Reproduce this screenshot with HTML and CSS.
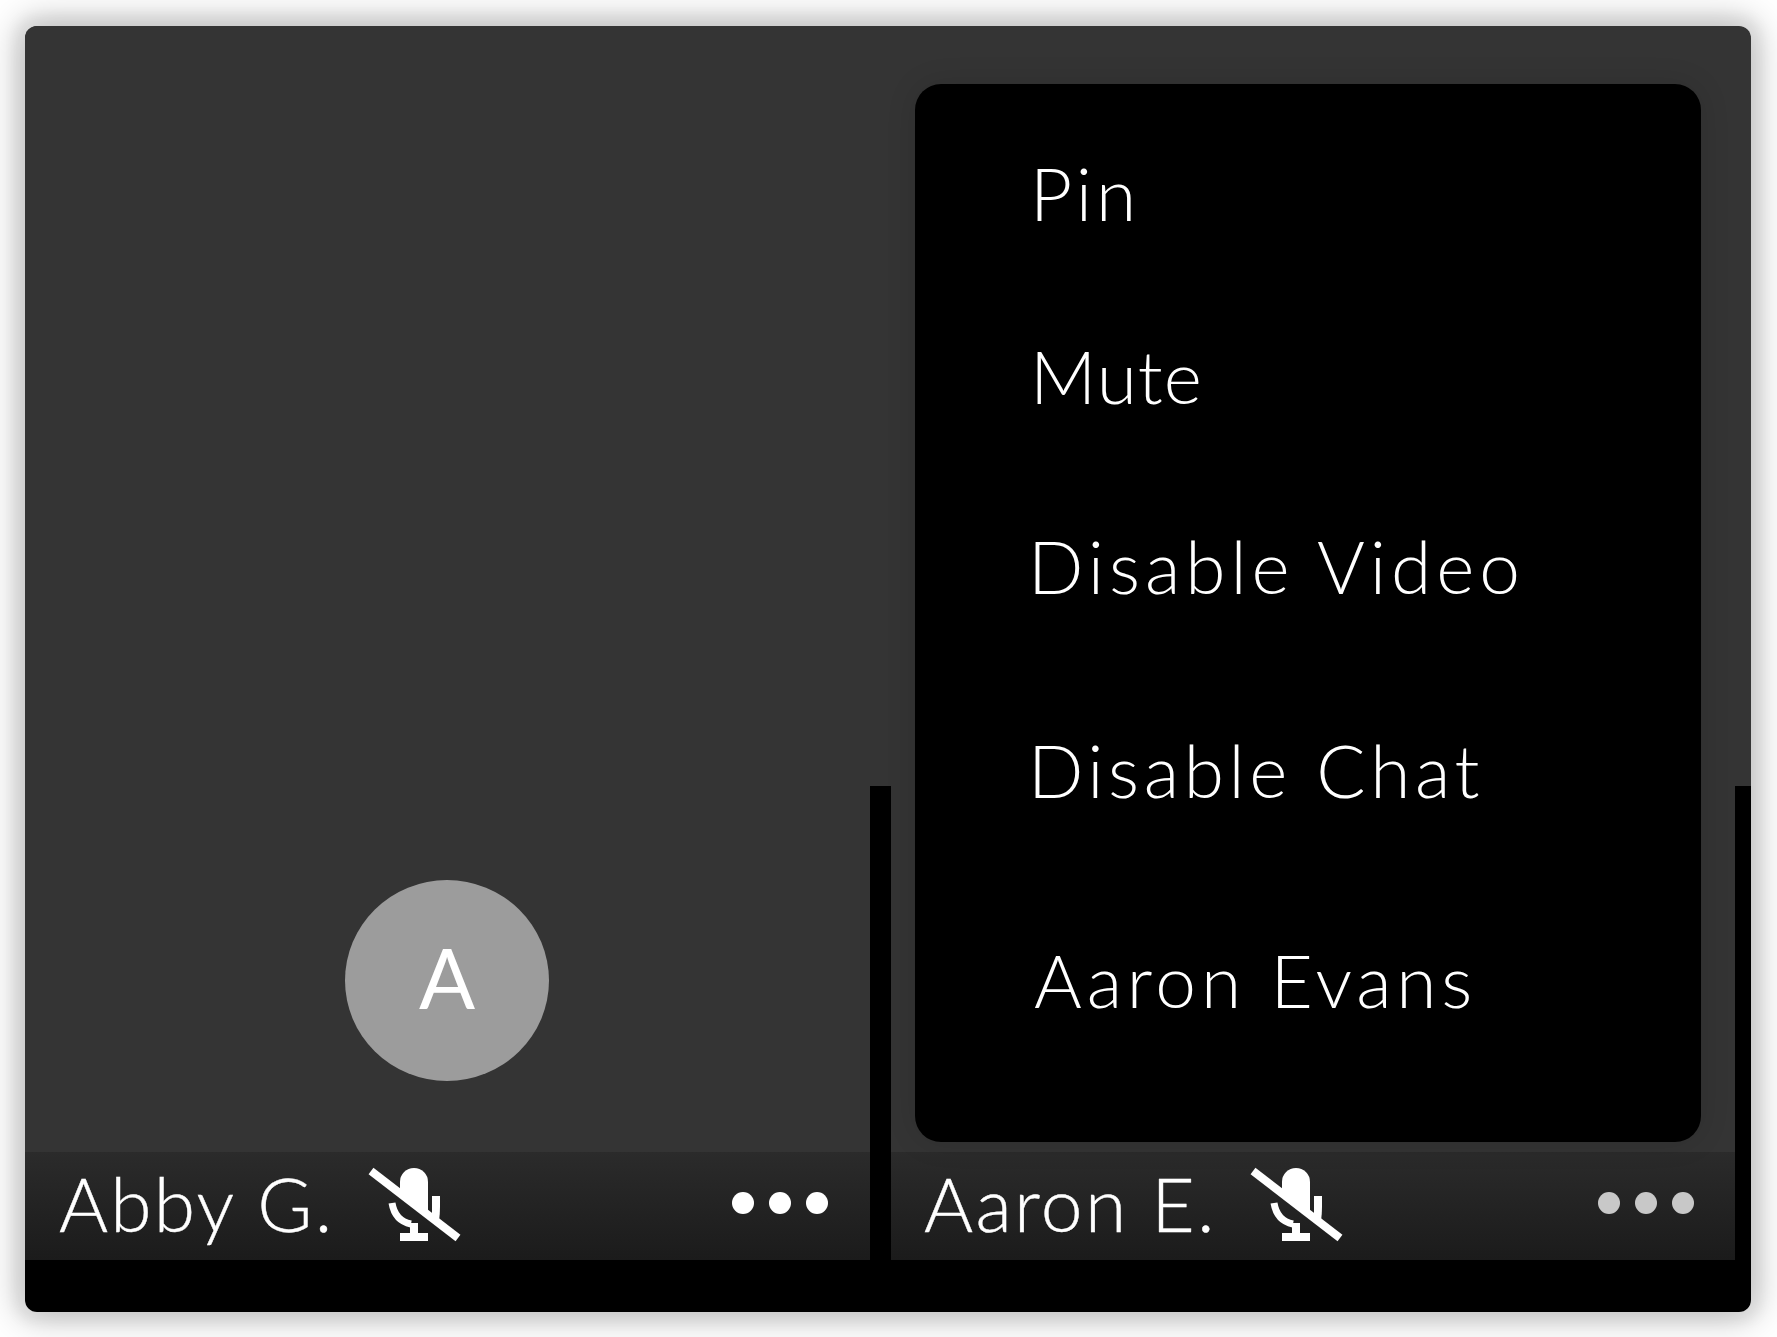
FILE: index.html
```html
<!DOCTYPE html>
<html lang="en">
<head>
<meta charset="utf-8">
<title>Meeting tiles</title>
<link rel="stylesheet" href="styles.css">
</head>
<body>
<main class="card">
  <section class="tile tile-left">
    <div class="avatar"><span class="initial">A</span></div>
    <footer class="bar">
      <span class="name">Abby G.</span>
      <svg class="mic" viewBox="0 0 100 80" aria-hidden="true">
        <path class="mic-fill" d="M35 17a14 14 0 0 1 28 0V52L35 30Z"/>
        <path class="mic-fill" d="M67 31h8V42q0 6-1 14l-7-5Z"/>
        <path class="mic-line" d="M27 38C29 50 36 57 46 59"/>
        <path class="mic-fill" d="M45 58h8V68h10v8H35V68h10Z"/>
        <path class="mic-slash" d="M6 6 93 73"/>
      </svg>
      <div class="dots"><i></i><i></i><i></i></div>
    </footer>
  </section>
  <section class="tile tile-right">
    <nav class="menu">
      <div class="item item-pin">Pin</div>
      <div class="item item-mute">Mute</div>
      <div class="item item-video">Disable Video</div>
      <div class="item item-chat">Disable Chat</div>
      <div class="item item-name">Aaron Evans</div>
    </nav>
    <footer class="bar">
      <span class="name">Aaron E.</span>
      <svg class="mic" viewBox="0 0 100 80" aria-hidden="true">
        <path class="mic-fill" d="M35 17a14 14 0 0 1 28 0V52L35 30Z"/>
        <path class="mic-fill" d="M67 31h8V42q0 6-1 14l-7-5Z"/>
        <path class="mic-line" d="M27 38C29 50 36 57 46 59"/>
        <path class="mic-fill" d="M45 58h8V68h10v8H35V68h10Z"/>
        <path class="mic-slash" d="M6 6 93 73"/>
      </svg>
      <div class="dots dots-dim"><i></i><i></i><i></i></div>
    </footer>
  </section>
</main>
</body>
</html>
```
FILE: styles.css
```css
* { box-sizing: border-box; }
html, body { margin: 0; height: 100%; background: #fff; }
body {
  padding: 26px 26px 24px 25px;
  font-family: "Lato", "Liberation Sans", sans-serif;
  font-weight: 300;
  color: #fff;
  overflow: hidden;
}
.card {
  width: 1726px;
  height: 1286px;
  border-radius: 12px;
  overflow: hidden;
  display: grid;
  grid-template-columns: 845px 844px;
  column-gap: 21px;
  grid-template-rows: 1234px;
  background: linear-gradient(#343434 760px, #000 760px);
  box-shadow: 0 0 36px 6px rgba(0, 0, 0, .26), 0 0 12px 12px rgba(0, 0, 0, .04);
}
.tile {
  position: relative;
  background: #343434;
  display: flex;
  flex-direction: column;
}
.avatar {
  width: 204px;
  height: 201px;
  margin: 854px 0 0 320px;
  border-radius: 50%;
  background: #9c9c9c;
  display: flex;
  align-items: center;
  justify-content: center;
  padding-bottom: 6px;
  font-size: 83px;
  font-weight: 400;
  line-height: 1;
}
.bar {
  margin-top: auto;
  height: 108px;
  display: flex;
  align-items: center;
  padding-bottom: 5px;
  background: linear-gradient(#2b2b2b, #1b1b1b);
}
.tile-left .bar { padding-left: 34px; padding-right: 42px; }
.tile-right .bar { padding-left: 33px; padding-right: 41px; }
.name {
  font-size: 75px;
  line-height: 1;
  letter-spacing: 2.3px;
  white-space: nowrap;
  -webkit-text-stroke: .4px #fff;
}
.mic {
  width: 100px;
  height: 80px;
  margin: 3px 0 0 30px;
  flex: none;
}
.mic-fill { fill: #fff; }
.mic-line { fill: none; stroke: #fff; stroke-width: 7; }
.mic-slash { fill: none; stroke: #fff; stroke-width: 8; }
.dots {
  margin: 0 0 2px auto;
  display: flex;
  gap: 15px;
}
.dots i {
  display: block;
  width: 22px;
  height: 22px;
  border-radius: 50%;
  background: #fff;
}
.dots-dim i { background: #c8c8c8; }
.menu {
  position: absolute;
  left: 24px;
  top: 58px;
  width: 786px;
  height: 1058px;
  border-radius: 26px;
  background: #000;
  box-shadow: 0 0 30px rgba(0, 0, 0, .12);
  display: flex;
  flex-direction: column;
  font-size: 73px;
  line-height: 80px;
}
.item { white-space: nowrap; letter-spacing: 4.6px; }
.item-pin { margin: 69px 0 0 115px; letter-spacing: 4px; }
.item-mute { margin: 103px 0 0 115px; letter-spacing: 1px; }
.item-video { margin: 110px 0 0 113px; letter-spacing: 5px; }
.item-chat { margin: 124px 0 0 113px; letter-spacing: 4.6px; }
.item-name { margin: 130px 0 0 119px; letter-spacing: 4.8px; }
```
